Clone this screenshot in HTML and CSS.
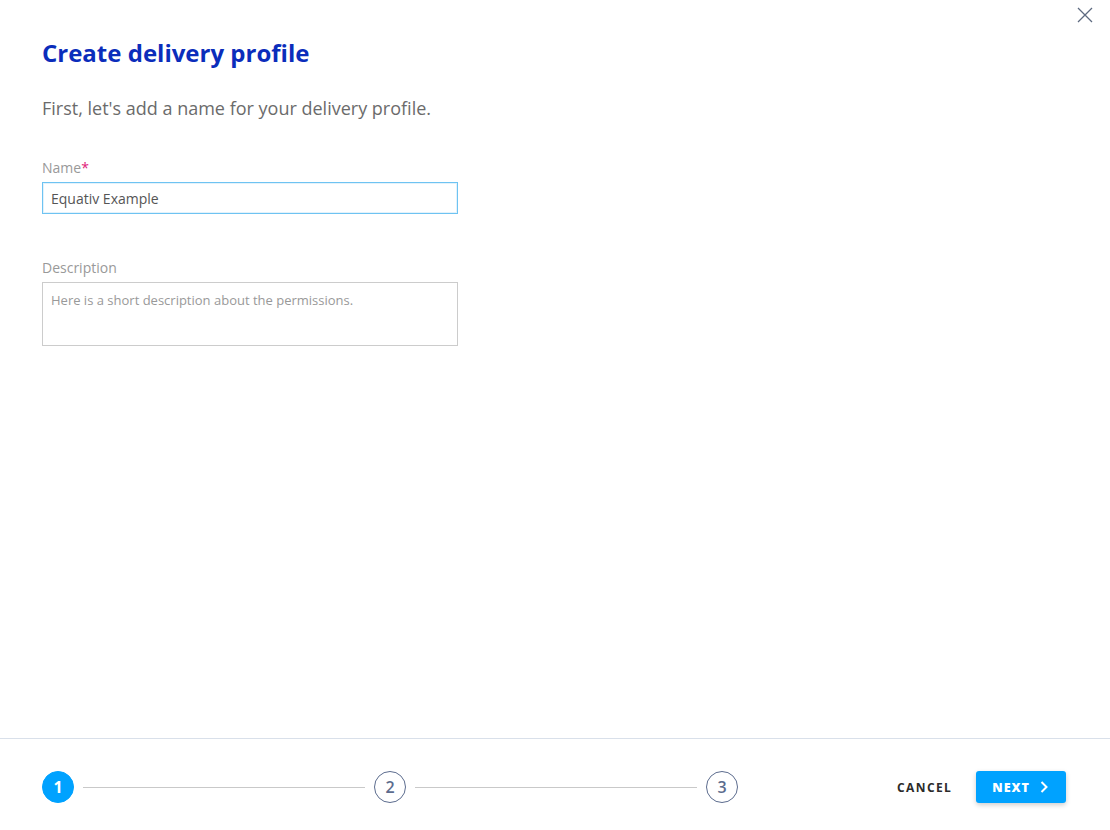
FILE: index.html
```html
<!DOCTYPE html>
<html lang="en">
<head>
<meta charset="UTF-8">
<meta name="viewport" content="width=device-width, initial-scale=1.0">
<title>Create delivery profile</title>
<link rel="stylesheet" href="styles.css">
</head>
<body>
<div class="modal">
    <button class="close-btn" aria-label="Close">
        <svg width="16" height="16" viewBox="0 0 16 16">
            <path d="M1 1 L15 15 M15 1 L1 15" stroke="#5d6a80" stroke-width="1.3" fill="none"/>
        </svg>
    </button>

    <div class="modal-body">
        <h1 class="modal-title">Create delivery profile</h1>
        <p class="modal-intro">First, let's add a name for your delivery profile.</p>

        <div class="field">
            <label class="field-label" for="name">Name<span class="required">*</span></label>
            <input class="field-input" id="name" type="text" value="Equativ Example" autofocus>
        </div>

        <div class="field">
            <label class="field-label" for="desc">Description</label>
            <textarea class="field-textarea" id="desc" placeholder="Here is a short description about the permissions."></textarea>
        </div>
    </div>

    <div class="modal-footer">
        <div class="stepper">
            <span class="step step-active">1</span>
            <span class="step-line"></span>
            <span class="step">2</span>
            <span class="step-line"></span>
            <span class="step">3</span>
        </div>
        <div class="actions">
            <button class="btn-cancel">CANCEL</button>
            <button class="btn-next">NEXT
                <svg width="10" height="14" viewBox="0 0 10 14">
                    <path d="M2.5 2 L7.5 7 L2.5 12" stroke="#fff" stroke-width="2" fill="none"/>
                </svg>
            </button>
        </div>
    </div>
</div>
<script>
    var input = document.getElementById("name");
    input.focus();
    input.setSelectionRange(input.value.length, input.value.length);
</script>
</body>
</html>
```

FILE: styles.css
```css
body {
    margin: 0;
    padding: 0;
    font-family: "Open Sans", Arial, sans-serif;
    background: #fff;
}

.modal {
    position: relative;
    display: flex;
    flex-direction: column;
    height: 830px;
}

.close-btn {
    position: absolute;
    top: 7px;
    right: 17px;
    padding: 0;
    border: none;
    background: none;
    cursor: pointer;
}

.modal-body {
    flex: 1;
    padding: 37px 42px 0 42px;
}

.modal-title {
    margin: 0;
    font-size: 24px;
    line-height: 32px;
    font-weight: 700;
    color: #0b2dbb;
}

.modal-intro {
    margin: 27px 0 0 0;
    font-size: 18px;
    line-height: 24px;
    color: #6b6b6b;
}

.field {
    width: 416px;
    margin-top: 38px;
}

.field + .field {
    margin-top: 44px;
}

.field-label {
    display: block;
    margin-bottom: 4px;
    font-size: 14px;
    line-height: 20px;
    color: #999;
}

.required {
    color: #e0207a;
}

.field-input {
    display: block;
    box-sizing: border-box;
    width: 100%;
    height: 32px;
    padding: 0 8px;
    border: 1px solid #6ec3f2;
    box-shadow: inset 0 0 0 1px #e3f2fb;
    font-family: "Open Sans", Arial, sans-serif;
    font-size: 14px;
    color: #555;
    outline: none;
    caret-color: #333;
}

.field-textarea {
    display: block;
    box-sizing: border-box;
    width: 100%;
    height: 64px;
    padding: 7px 8px;
    border: 1px solid #ccc;
    resize: none;
    font-family: "Open Sans", Arial, sans-serif;
    font-size: 13px;
    line-height: 20px;
    color: #555;
    outline: none;
}

.field-textarea::placeholder {
    color: #999;
}

.modal-footer {
    display: flex;
    align-items: center;
    height: 92px;
    box-sizing: border-box;
    padding: 0 44px 0 42px;
    border-top: 1px solid #d9e0ea;
}

.stepper {
    display: flex;
    align-items: center;
    width: 696px;
    margin-top: 5px;
}

.step {
    display: flex;
    align-items: center;
    justify-content: center;
    box-sizing: border-box;
    width: 32px;
    height: 32px;
    border: 1px solid #5c6c8e;
    border-radius: 50%;
    font-size: 16px;
    font-weight: 600;
    color: #5c6c8e;
}

.step-active {
    border-color: #00a2ff;
    background: #00a2ff;
    color: #fff;
    font-weight: 700;
}

.step-line {
    flex: 1;
    height: 1px;
    margin: 0 9px;
    background: #c9c9c9;
}

.actions {
    display: flex;
    align-items: center;
    margin-left: auto;
    margin-top: 5px;
}

.btn-cancel {
    padding: 0;
    margin-right: 24px;
    border: none;
    background: none;
    font-family: "Open Sans", Arial, sans-serif;
    font-size: 12px;
    font-weight: 700;
    letter-spacing: 1.4px;
    color: #2b2b2b;
    cursor: pointer;
}

.btn-next {
    display: flex;
    align-items: center;
    gap: 9px;
    height: 32px;
    padding: 0 17px 0 16px;
    border: none;
    border-radius: 3px;
    background: #00a2ff;
    box-shadow: 0 2px 5px rgba(0, 0, 0, 0.2);
    font-family: "Open Sans", Arial, sans-serif;
    font-size: 12.5px;
    font-weight: 800;
    letter-spacing: 1px;
    color: #fff;
    cursor: pointer;
}
```
